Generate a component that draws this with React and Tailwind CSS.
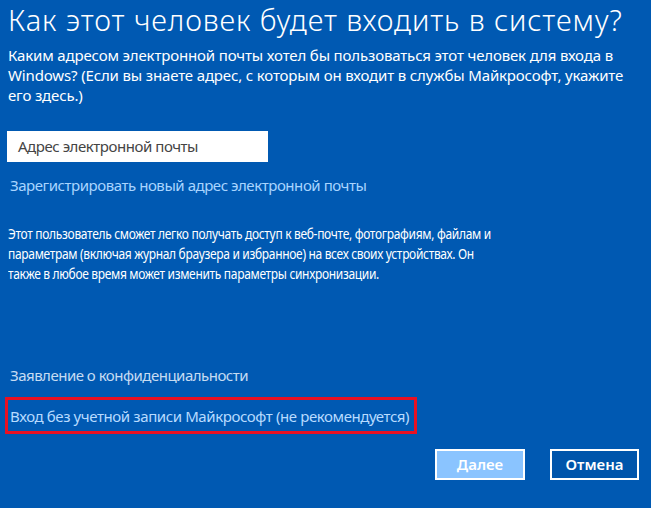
export default function App() {
  return (
    <div
      className="w-[651px] h-[508px] bg-[#0059b2] text-white overflow-hidden flex flex-col"
      style={{ fontFamily: '"Noto Sans", "Open Sans", sans-serif' }}
    >
      <h1 className="ml-[8px] mt-[1px] text-[29px] leading-[38px] font-light tracking-[0.9px] whitespace-nowrap">
        Как этот человек будет входить в систему?
      </h1>
      <p className="ml-[8px] mt-[6px] w-[630px] text-[15px] leading-[20px] tracking-[-0.15px]">
        Каким адресом электронной почты хотел бы пользоваться этот человек для входа в Windows? (Если вы знаете адрес, с которым он входит в службы Майкрософт, укажите его здесь.)
      </p>
      <div className="ml-[7px] mt-[26px] w-[261px] h-[31px] bg-white flex items-center pl-[11px] text-[15px] tracking-[-0.45px] text-[#444]">
        Адрес электронной почты
      </div>
      <a className="ml-[10px] mt-[13px] text-[15px] leading-[20px] tracking-[-0.45px] text-[#a9d5ff] whitespace-nowrap">
        Зарегистрировать новый адрес электронной почты
      </a>
      <p className="ml-[8px] mt-[28px] text-[15px] leading-[20px] tracking-[-0.4px] whitespace-nowrap scale-x-[0.8] origin-left">
        Этот пользователь сможет легко получать доступ к веб-почте, фотографиям, файлам и
        <br />
        параметрам (включая журнал браузера и избранное) на всех своих устройствах. Он
        <br />
        также в любое время может изменить параметры синхронизации.
      </p>
      <a className="ml-[10px] mt-[82px] text-[15px] leading-[20px] tracking-[-0.5px] text-[#c6dcf2] whitespace-nowrap">
        Заявление о конфиденциальности
      </a>
      <div className="ml-[5px] mt-[12px] w-[412px] h-[37px] border-[3px] border-[#e81123] flex items-center pl-[2px]">
        <span className="text-[15px] leading-[20px] tracking-[-0.4px] text-[#b7dbff] whitespace-nowrap">
          Вход без учетной записи Майкрософт (не рекомендуется)
        </span>
      </div>
      <div className="mt-[15px] flex justify-end gap-[25px] pr-[12px]">
        <button className="w-[90px] h-[31px] border-2 border-white bg-[#8ac4ff] text-[15px] font-semibold text-white">
          Далее
        </button>
        <button className="w-[89px] h-[31px] border-2 border-white bg-[#0055ab] text-[15px] font-semibold text-white">
          Отмена
        </button>
      </div>
    </div>
  );
}
